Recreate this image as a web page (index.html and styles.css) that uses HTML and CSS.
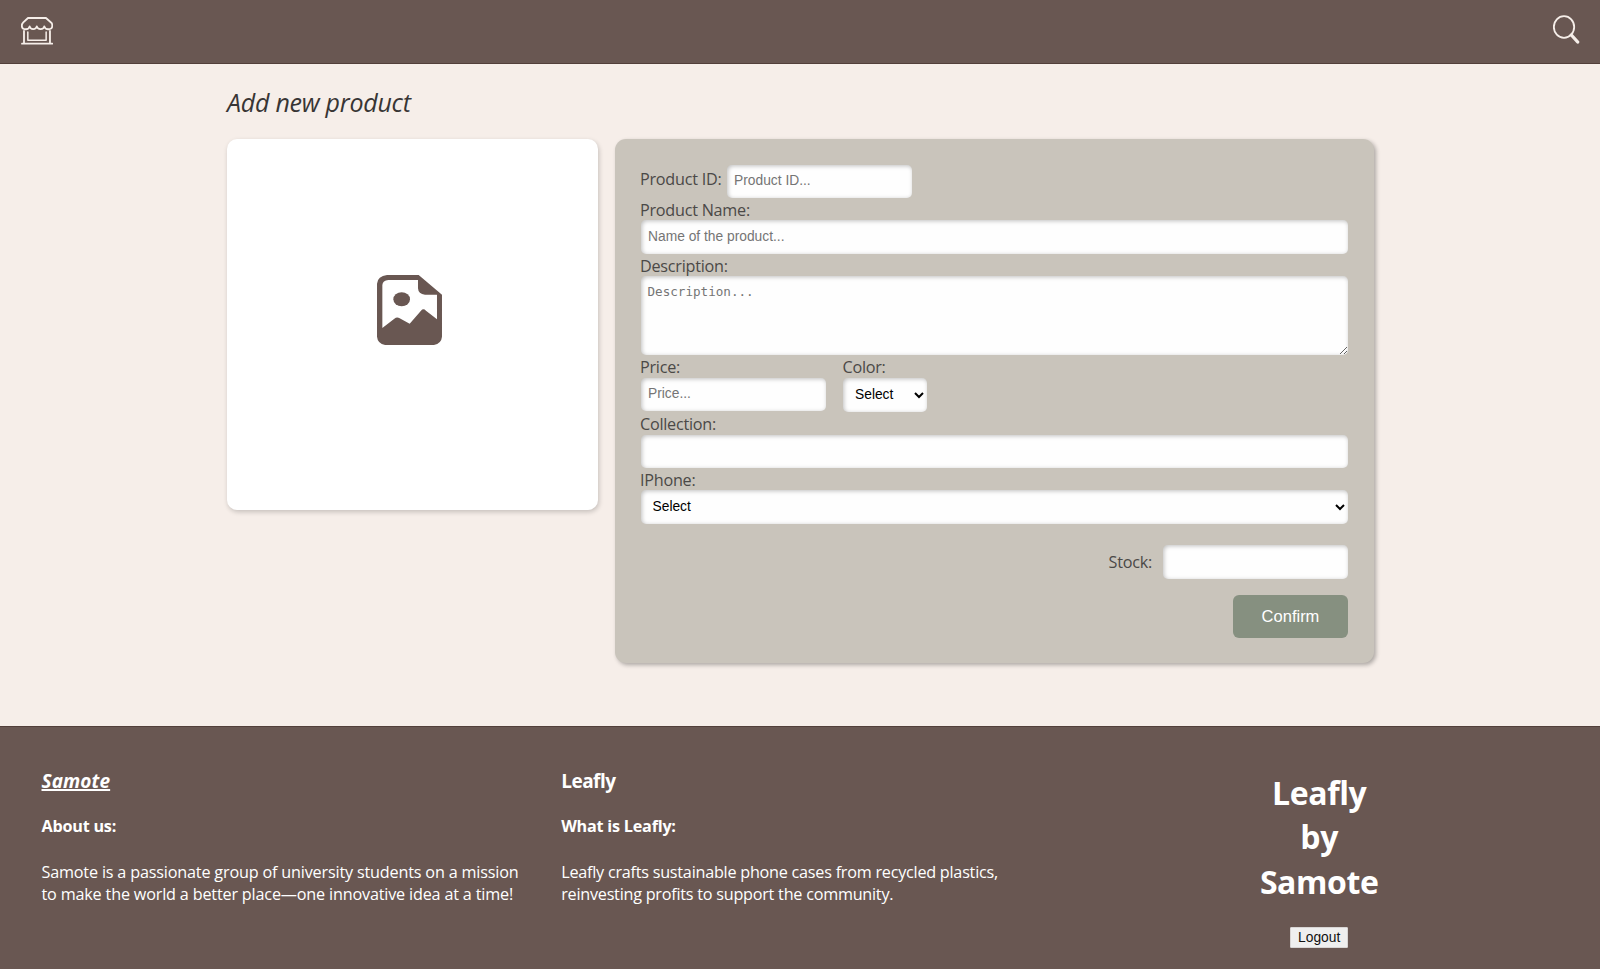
FILE: index.html
```html
<!DOCTYPE html>
<html lang="en">
<head>
<meta charset="utf-8">
<title>Leafly - Add new product</title>
<link rel="stylesheet" href="styles.css">
</head>
<body>
<header class="topbar">
  <svg class="icon-store" viewBox="62 51 97 83" fill="none" stroke="#f6eee9" stroke-width="5.500" stroke-linejoin="round" stroke-linecap="round">
    <path d="M83 54H137L153 68Q156 71 156 77C156 91 135 91 132 79C130 90 112 90 109.500 79C107 90 90 90 88 79C85 91 64.500 91 64.500 77Q64.500 71 68 68Z"/>
    <path d="M71 93V129M149 93V129M65 131H156"/>
    <path stroke-width="4.500" d="M82.500 96V120.500H137.500V96"/>
  </svg>
  <svg class="icon-search" viewBox="459 45 80 87" fill="none" stroke="#f6eee9" stroke-linecap="round">
    <ellipse cx="492" cy="81" rx="30.500" ry="32.500" stroke-width="5.500"/>
    <path d="M514 105L533 126" stroke-width="10"/>
  </svg>
</header>
<main class="page">
  <h1 class="title">Add new product</h1>
  <div class="columns">
    <div class="photo">
      <svg class="icon-image" viewBox="82 73 195 211">
        <path fill="#695752" fill-rule="evenodd" d="M112 73H207L277 132V258Q275 281 247 284H112Q84 281 82 258V99Q84 76 112 73ZM116 88Q99 89 98 103V232L134 204Q142 198 150 203L180 219L214 180Q221 172 229 180L262 206V132H226Q206 131 205 113V88Z"/>
        <ellipse cx="156" cy="146" rx="25" ry="21" fill="#695752"/>
      </svg>
    </div>
    <form class="card">
      <div class="id-row">
        <label class="label" for="pid">Product ID:</label>
        <input class="field" id="pid" placeholder="Product ID...">
      </div>
      <label class="label" for="name">Product Name:</label>
      <input class="field wide" id="name" placeholder="Name of the product...">
      <label class="label" for="desc">Description:</label>
      <textarea class="field area" id="desc" placeholder="Description..."></textarea>
      <div class="pair">
        <div class="stack">
          <label class="label" for="price">Price:</label>
          <input class="field" id="price" placeholder="Price...">
        </div>
        <div class="stack">
          <label class="label" for="color">Color:</label>
          <select class="field select color" id="color"><option>Select</option></select>
        </div>
      </div>
      <label class="label" for="collection">Collection:</label>
      <input class="field wide" id="collection">
      <label class="label" for="iphone">IPhone:</label>
      <select class="field select wide" id="iphone"><option>Select</option></select>
      <div class="stock-row">
        <label class="label" for="stock">Stock:</label>
        <input class="field" id="stock">
      </div>
      <button class="confirm" type="button">Confirm</button>
    </form>
  </div>
</main>
<footer class="footer">
  <section class="about">
    <h3 class="head"><a class="link">Samote</a></h3>
    <h4 class="sub">About us:</h4>
    <p class="text">Samote is a passionate group of university students on a mission<br>to make the world a better place—one innovative idea at a time!</p>
  </section>
  <section class="about">
    <h3 class="head tight">Leafly</h3>
    <h4 class="sub">What is Leafly:</h4>
    <p class="text text-tight">Leafly crafts sustainable phone cases from recycled plastics,<br>reinvesting profits to support the community.</p>
  </section>
  <section class="brand">
    <h2 class="brand-name">Leafly<br>by<br>Samote</h2>
    <button class="logout" type="button">Logout</button>
  </section>
</footer>
</body>
</html>
```
FILE: styles.css
```css
* { box-sizing: border-box; }
body {
  margin: 0;
  height: 969px;
  overflow: hidden;
  display: flex;
  flex-direction: column;
  background: #f6eee9;
  font-family: "Open Sans", "Noto Sans", sans-serif;
}
h1, h2, h3, h4, p { margin: 0; }

.topbar {
  height: 64px;
  flex: none;
  display: flex;
  justify-content: space-between;
  align-items: flex-start;
  padding: 15px 20.5px 0 20.5px;
  background: #695752;
  border-bottom: 1px solid #523f3a;
}
.icon-store { width: 32.3px; height: 27.7px; margin-top: 2px; }
.icon-search { width: 26.7px; height: 29px; }

.page { height: 662px; flex: none; padding: 21px 0 0 227px; }
.title {
  height: 54.3px;
  font-size: 25px;
  line-height: 34px;
  font-weight: 400;
  font-style: italic;
  letter-spacing: -0.25px;
  color: #383534;
}
.columns { display: flex; align-items: flex-start; gap: 17px; }
.photo {
  width: 371px;
  height: 371px;
  display: flex;
  justify-content: center;
  align-items: center;
  padding: 0 6.500px 30px 0;
  background: #fff;
  border-radius: 10px;
  box-shadow: 1px 2px 5px rgba(0, 0, 0, 0.2);
}
.icon-image { width: 65px; height: 70.3px; }

.card {
  width: 759px;
  height: 524px;
  display: flex;
  flex-direction: column;
  padding: 25.5px 26px 0 25px;
  background: #c9c4bb;
  border-radius: 11px;
  box-shadow: 2px 2px 4px rgba(0, 0, 0, 0.3);
}
.label {
  display: block;
  height: 22.5px;
  font-size: 16.2px;
  line-height: 24px;
  letter-spacing: -0.25px;
  color: #4b4947;
  white-space: nowrap;
}
.field {
  width: 185px;
  height: 33.2px;
  flex: none;
  margin: 0 0 0 0.5px;
  padding: 0 7.500px 2px;
  border: 0;
  border-radius: 5px;
  background: #fefefe;
  box-shadow: inset 1px 1px 4px rgba(0, 0, 0, 0.25);
  font: 13.8px "Liberation Sans", Arial, sans-serif;
  color: #000;
}
.field::placeholder { color: #757575; }
.wide { width: 707.5px; }
.area {
  width: 707.5px;
  height: 79px;
  padding: 8px 7px;
  font: 12.6px "DejaVu Sans Mono", monospace;
  resize: both;
}
.select { height: 34px; padding: 0 4px 1px 8px; }
.color { width: 84px; }
.id-row { display: flex; }
.id-row .label { width: 86px; height: 33px; padding-top: 2px; }
.pair { display: flex; height: 57px; gap: 17px; }
.stack { display: flex; flex-direction: column; }
.stock-row {
  display: flex;
  justify-content: flex-end;
  gap: 10.500px;
  margin: 21px 0 16px;
}
.stock-row .label { height: 33px; padding-top: 5px; }
.confirm {
  width: 115px;
  height: 43px;
  align-self: flex-end;
  padding: 0;
  border: 0;
  border-radius: 6px;
  background: #869080;
  color: #fff;
  font: 16.5px "Liberation Sans", Arial, sans-serif;
}

.footer {
  flex: 1;
  display: grid;
  grid-template-columns: 519.7px 519.7px 1fr;
  padding: 39px 0 0 41.5px;
  background: #695752;
  border-top: 1px solid #523f3a;
  color: #fff;
}
.about { padding-top: 2px; white-space: nowrap; }
.head { font-size: 19px; line-height: 26px; letter-spacing: 0.1px; }
.tight { letter-spacing: -0.5px; }
.link { font-style: italic; text-decoration: underline; text-decoration-thickness: 2px; }
.sub { margin-top: 21px; font-size: 16.2px; line-height: 23px; letter-spacing: -0.23px; }
.text { margin-top: 22.5px; font-size: 16.2px; line-height: 22.5px; letter-spacing: -0.18px; }
.text-tight { letter-spacing: -0.24px; }
.brand {
  display: flex;
  flex-direction: column;
  align-items: center;
  padding: 5px 42.5px 0 0;
}
.brand-name {
  font-size: 32px;
  line-height: 44.3px;
  letter-spacing: -0.4px;
  text-align: center;
}
.logout {
  width: 58px;
  height: 21px;
  margin-top: 23.500px;
  padding: 0;
  border: 1px solid #d8d5d4;
  border-radius: 1px;
  background: #efefef;
  color: #111;
  font: 13.8px "Liberation Sans", Arial, sans-serif;
}
```
